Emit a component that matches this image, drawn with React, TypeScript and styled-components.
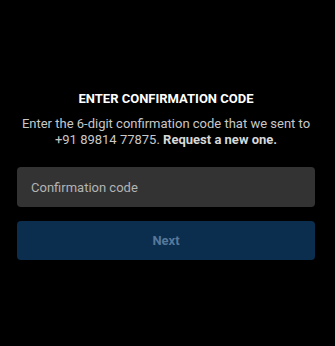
import styled, { createGlobalStyle } from 'styled-components';

const GlobalStyle = createGlobalStyle`
  html, body {
    margin: 0;
    padding: 0;
    background: #000;
  }
  body {
    font-family: Roboto, "Liberation Sans", sans-serif;
  }
`;

function App() {
  return (
    <Screen>
      <GlobalStyle />
      <Title>ENTER CONFIRMATION CODE</Title>
      <Hint>
        Enter the 6-digit confirmation code that we sent to +91 89814 77875.{' '}
        <ResendLink>Request a new one.</ResendLink>
      </Hint>
      <CodeInput placeholder="Confirmation code" />
      <NextButton disabled>Next</NextButton>
    </Screen>
  );
}

export default App;

const Screen = styled.div`
  width: 335px;
  height: 346px;
  box-sizing: border-box;
  background: #000;
  padding: 91px 20px 0 17px;
  display: flex;
  flex-direction: column;
  align-items: stretch;
`;

const Title = styled.h1`
  margin: 0;
  font-size: 13px;
  line-height: 16px;
  font-weight: 700;
  color: #fff;
  text-align: center;
`;

const Hint = styled.p`
  margin: 9px 0 0;
  font-size: 13px;
  line-height: 16px;
  color: #c8c8c8;
  text-align: center;
  padding: 0 4px;
`;

const ResendLink = styled.span`
  font-weight: 700;
  color: #d8d8d8;
`;

const CodeInput = styled.input`
  margin-top: 19px;
  height: 40px;
  box-sizing: border-box;
  border: none;
  border-radius: 4px;
  background: #333333;
  padding: 0 14px;
  font-family: Roboto, "Liberation Sans", sans-serif;
  font-size: 13px;
  color: #fff;
  outline: none;
  &::placeholder {
    color: #b4b4b4;
  }
`;

const NextButton = styled.button`
  margin-top: 14px;
  height: 39px;
  border: none;
  border-radius: 4px;
  background: #0b2d4e;
  color: #56789a;
  font-family: Roboto, "Liberation Sans", sans-serif;
  font-size: 13px;
  font-weight: 700;
`;
